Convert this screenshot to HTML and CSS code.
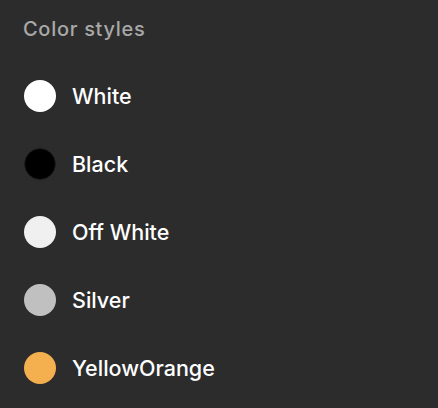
FILE: index.html
```html
<!DOCTYPE html>
<html>
<head>
<meta charset="utf-8">
<link rel="stylesheet" href="styles.css">
</head>
<body>
<div class="panel">
  <div class="title">Color styles</div>
  <ul class="list">
    <li class="row"><span class="swatch white"></span><span class="label">White</span></li>
    <li class="row"><span class="swatch black"></span><span class="label">Black</span></li>
    <li class="row"><span class="swatch offwhite"></span><span class="label">Off White</span></li>
    <li class="row"><span class="swatch silver"></span><span class="label">Silver</span></li>
    <li class="row"><span class="swatch yellow"></span><span class="label">YellowOrange</span></li>
  </ul>
</div>
</body>
</html>
```
FILE: styles.css
```css
html, body {
  margin: 0;
  padding: 0;
  background: #2c2c2c;
  height: 100%;
}
.panel {
  font-family: Inter, "Noto Sans", sans-serif;
  padding: 17px 0 0 23px;
}
.title {
  font-size: 20px;
  line-height: 24px;
  font-weight: 500;
  letter-spacing: 0.7px;
  color: #a8a8a8;
}
.list {
  list-style: none;
  margin: 39px 0 0 0;
  padding: 0;
  display: flex;
  flex-direction: column;
  gap: 36px;
}
.row {
  display: flex;
  align-items: center;
  gap: 16px;
  height: 32px;
  padding-left: 1px;
}
.swatch {
  width: 32px;
  height: 32px;
  border-radius: 50%;
  box-sizing: border-box;
  flex: none;
}
.white { background: #ffffff; }
.black { background: #000000; border: 1px solid #1e1e1e; }
.offwhite { background: #f0f0f0; }
.silver { background: #c0c0c0; }
.yellow { background: #f4b04f; }
.label {
  font-size: 21.5px;
  line-height: 26px;
  font-weight: 500;
  color: #ffffff;
}
```
